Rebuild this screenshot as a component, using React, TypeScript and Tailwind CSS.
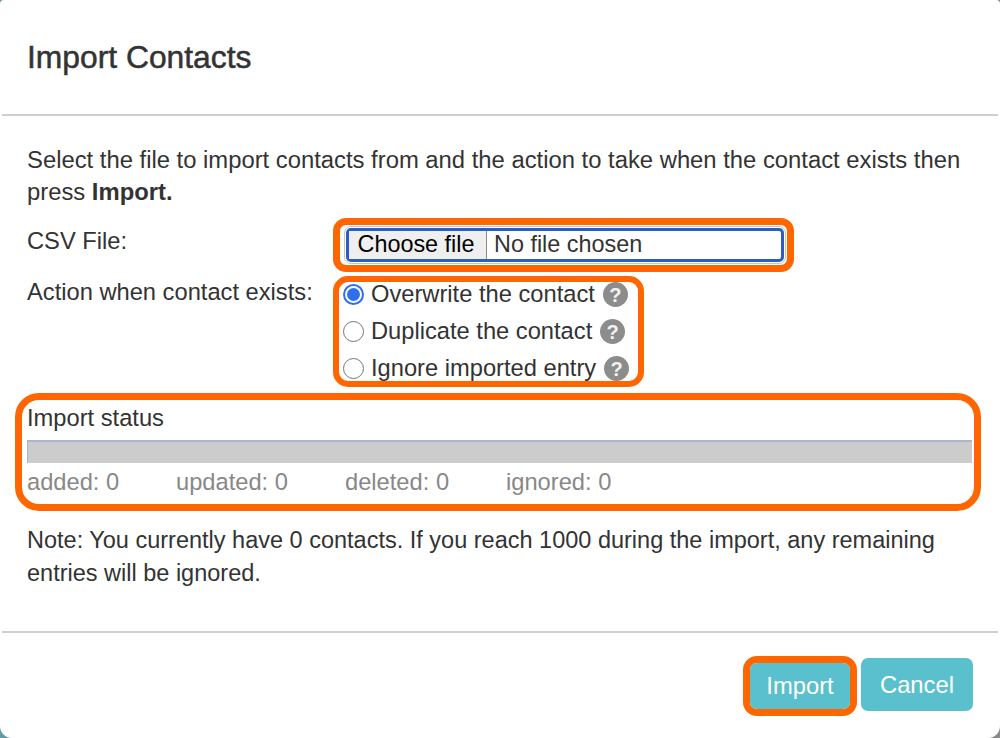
import React from 'react';

const HelpIcon = () => (
  <span className="ml-[8px] inline-flex h-[25px] w-[25px] items-center justify-center rounded-full bg-[#8c8c8c] text-[20px] font-bold leading-none text-[#f2f2f2]">?</span>
);

const RadioDot = ({ checked }: { checked?: boolean }) =>
  checked ? (
    <span className="flex h-[21px] w-[21px] items-center justify-center rounded-full border-[2px] border-[#2f6fed] bg-white">
      <span className="h-[13px] w-[13px] rounded-full bg-[#2f6fed]" />
    </span>
  ) : (
    <span className="h-[21px] w-[21px] rounded-full border border-[#767676] bg-white" />
  );

const actions = [
  { label: 'Overwrite the contact', checked: true },
  { label: 'Duplicate the contact' },
  { label: 'Ignore imported entry' },
];

const App: React.FC = () => {
  return (
    <div className="h-[738px] w-[1000px] overflow-hidden bg-[linear-gradient(90deg,#5f9ea8_0%,#8a8a8a_2%)] font-['Liberation_Sans',Arial,sans-serif] text-[23.7px] text-[#333333]">
      <div className="h-full rounded-b-[12px] rounded-t-[4px] bg-white">
        {/* Header */}
        <div className="mx-[2px] flex h-[116px] items-center border-b-2 border-[#cfcfcf] px-[25px] pt-[1px]">
          <h1 className="text-[31.8px] font-medium [-webkit-text-stroke:0.5px_#333333]">Import Contacts</h1>
        </div>

        {/* Body */}
        <div className="h-[515px] px-[27px] pt-[28px]">
          <p className="text-[23.82px] leading-[32px]">
            Select the file to import contacts from and the action to take when the contact exists then press <b>Import.</b>
          </p>

          <div className="mt-[10px] flex h-[54px]">
            <div className="w-[306px] pt-[10px] leading-[26px]">CSV File:</div>
            <div className="flex h-[54px] w-[461px] items-center rounded-[13px] border-[7px] border-[#ff6600] pl-[6px]">
              <div className="flex h-[34px] w-[438px] items-center rounded-[5px] border-[3px] border-[#2a5ec4] bg-white text-[23.4px] leading-none outline outline-1 outline-offset-1 outline-[#c4c4c4]">
                <span className="flex h-full w-[138px] items-center justify-center border-r border-[#8a8a8a] bg-[#efefef] pr-[3px] text-black">Choose file</span>
                <span className="ml-[7px]">No file chosen</span>
              </div>
            </div>
          </div>

          <div className="mt-[4px] flex">
            <div className="w-[306px] pt-[3px] leading-[26px]">Action when contact exists:</div>
            <div className="flex h-[111px] w-[311px] flex-col gap-[12px] rounded-[15px] border-[6px] border-[#ff6600] pl-[4px]">
              {actions.map((a) => (
                <div key={a.label} className="flex h-[25px] items-center">
                  <RadioDot checked={a.checked} />
                  <span className="ml-[7px] whitespace-nowrap">{a.label}</span>
                  <HelpIcon />
                </div>
              ))}
            </div>
          </div>

          <div className="-ml-[12px] -mr-[8px] mt-[6px] h-[118px] rounded-[24px] border-[7px] border-[#ff6600] pl-[5px] pr-[2px]">
            <div className="pt-[4px] leading-[28px]">Import status</div>
            <div className="mt-[8px] h-[23px] border-l border-t-2 border-l-[#a9b6cf] border-t-[#a9b6cf] bg-[#cccccc]" />
            <div className="mt-[4px] flex leading-[30px] text-[#888888]">
              <span className="w-[149px]">added: 0</span>
              <span className="w-[169px]">updated: 0</span>
              <span className="w-[161px]">deleted: 0</span>
              <span>ignored: 0</span>
            </div>
          </div>

          <p className="mt-[13px] text-[23.5px] leading-[33px]">
            Note: You currently have 0 contacts. If you reach 1000 during the import, any remaining entries will be ignored.
          </p>
        </div>

        {/* Footer */}
        <div className="mx-[2px] flex h-[107px] items-start justify-end border-t-2 border-[#cfcfcf] pr-[25px] pt-[23px] text-[23.8px]">
          <div className="rounded-[14px] border-[7px] border-[#ff6600]">
            <button className="block h-[46px] w-[100px] rounded-[7px] bg-[#5bc0cd] text-center text-white">Import</button>
          </div>
          <button className="ml-[4px] mt-[2px] h-[53px] w-[112px] rounded-[7px] bg-[#5bc0cd] text-center text-white">Cancel</button>
        </div>
      </div>
    </div>
  );
};

export default App;
